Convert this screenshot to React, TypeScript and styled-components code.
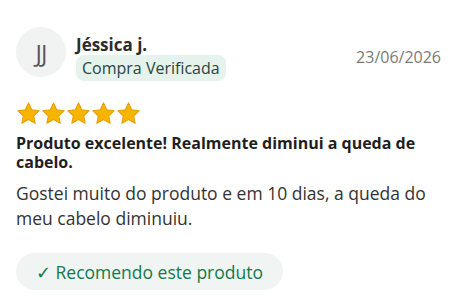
import React from 'react';
import styled, { createGlobalStyle } from 'styled-components';

const GlobalStyle = createGlobalStyle`
  body {
    margin: 0;
    background: #ffffff;
    font-family: 'Open Sans', 'Noto Sans', sans-serif;
  }
`;

const Card = styled.article`
  padding: 27px 20px 16px 16px;
  color: #222;
`;

const Header = styled.header`
  display: flex;
  align-items: flex-start;
  gap: 10px;
`;

const Avatar = styled.div`
  width: 50px;
  height: 50px;
  border-radius: 50%;
  background: #f0f3f2;
  color: #585858;
  font-size: 24px;
  letter-spacing: -1px;
  display: flex;
  align-items: center;
  justify-content: center;
  flex-shrink: 0;
`;

const Who = styled.div`
  display: flex;
  flex-direction: column;
  align-items: flex-start;
  flex: 1;
  margin-top: 8px;
`;

const Name = styled.span`
  font-size: 17px;
  font-weight: 700;
  color: #2b2b2b;
  line-height: 20px;
`;

const Badge = styled.span`
  background: #e5f3ec;
  color: #2a4444;
  font-size: 16px;
  line-height: 26px;
  padding: 0 6px;
  border-radius: 8px;
`;

const DateText = styled.time`
  font-size: 16px;
  line-height: 22px;
  color: #7a7a7a;
  margin-top: 19px;
`;

const Stars = styled.div`
  display: flex;
  margin-top: 20px;
`;

const Title = styled.h3`
  margin: 8px 0 0;
  font-size: 16px;
  font-weight: 700;
  line-height: 19px;
  color: #1f1f1f;
`;

const Body = styled.p`
  margin: 9px 0 0;
  font-size: 17.5px;
  line-height: 25px;
  color: #333;
`;

const Recommend = styled.div`
  display: inline-flex;
  align-items: center;
  margin-top: 22px;
  padding: 0 20px;
  height: 37px;
  border-radius: 19px;
  background: #f0f4f2;
  color: #137a4a;
  font-size: 17.5px;
`;

const Star: React.FC = () => (
  <svg width="25" height="25" viewBox="0 0 24 24">
    <path
      d="M12 1.8l3.1 6.6 7.2.9-5.3 5 1.4 7.1L12 17.9l-6.4 3.5L7 14.3 1.7 9.3l7.2-.9z"
      fill="#f7b500"
      stroke="#e49e00"
      strokeWidth="1"
      strokeLinejoin="round"
    />
  </svg>
);

const App: React.FC = () => (
  <>
    <GlobalStyle />
    <Card>
      <Header>
        <Avatar>JJ</Avatar>
        <Who>
          <Name>Jéssica j.</Name>
          <Badge>Compra Verificada</Badge>
        </Who>
        <DateText>23/06/2026</DateText>
      </Header>
      <Stars>
        {[0, 1, 2, 3, 4].map(i => <Star key={i} />)}
      </Stars>
      <Title>Produto excelente! Realmente diminui a queda de cabelo.</Title>
      <Body>Gostei muito do produto e em 10 dias, a queda do meu cabelo diminuiu.</Body>
      <Recommend>✓ Recomendo este produto</Recommend>
    </Card>
  </>
);

export default App;
